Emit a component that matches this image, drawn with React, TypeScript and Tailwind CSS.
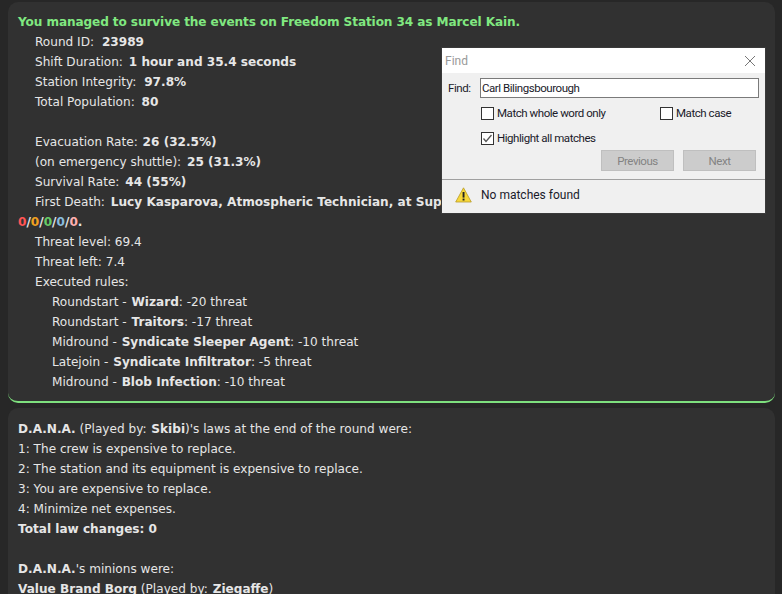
import React from 'react';

const Line = ({ indent = 0, children }: { indent?: 0 | 1 | 2; children?: React.ReactNode }) => (
  <div className={`h-5 whitespace-nowrap ${indent === 1 ? 'pl-[17px]' : indent === 2 ? 'pl-[34px]' : ''}`}>{children}</div>
);

const Check = ({ checked }: { checked?: boolean }) => (
  <span className="flex h-[13px] w-[13px] items-center justify-center border border-[#333333] bg-white">
    {checked && (
      <svg width="11" height="11" viewBox="0 0 11 11" fill="none">
        <path d="M1.5 5.5 L4 8.5 L9.5 2" stroke="#555555" strokeWidth="1.3" />
      </svg>
    )}
  </span>
);

function FindDialog() {
  return (
    <div className="absolute left-[441px] top-[47px] w-[325px] h-[167px] border border-[#3a3a3a] bg-[#f0f0f0] font-['Roboto',sans-serif] text-[11.5px] tracking-[-0.45px] text-[#1a1a2a]">
      <div className="flex h-[25px] items-center justify-between bg-white pl-[3px] pr-[9px] text-[12px] tracking-normal text-[#999999]">
        <span>Find</span>
        <svg width="12" height="12" viewBox="0 0 12 12" fill="none">
          <path d="M1 1 L11 11 M11 1 L1 11" stroke="#777777" strokeWidth="1" />
        </svg>
      </div>
      <div className="flex items-center pt-[5px] pl-[6px] pr-[6px]">
        <span className="w-[32px]">Find:</span>
        <div className="flex h-[20px] w-[279px] items-center border border-[#7a7a7a] bg-white pl-[1px]">Carl Bilingsbourough</div>
      </div>
      <div className="mt-[5px] flex h-5 items-center pl-[39px]">
        <Check />
        <span className="ml-[3px] w-[163px]">Match whole word only</span>
        <Check />
        <span className="ml-[3px]">Match case</span>
      </div>
      <div className="mt-[5px] flex h-5 items-center gap-[3px] pl-[39px]">
        <Check checked />
        <span>Highlight all matches</span>
      </div>
      <div className="mt-[2px] flex justify-end gap-[9px] pr-[9px]">
        <div className="flex h-[21px] w-[73px] items-center justify-center border border-[#bfbfbf] bg-[#cccccc] text-[#838383]">Previous</div>
        <div className="flex h-[21px] w-[73px] items-center justify-center border border-[#bfbfbf] bg-[#cccccc] text-[#838383]">Next</div>
      </div>
      <div className="mt-[8px] flex h-[33px] items-center border-t border-[#a0a0a0] pb-[2px] pl-[13px]">
        <svg width="17" height="16" viewBox="0 0 17 16">
          <path d="M8.5 0.8 L16.3 15 L0.7 15 Z" fill="#f7d83a" stroke="#b79a28" strokeWidth="0.8" />
          <rect x="7.6" y="5" width="1.9" height="5.6" fill="#222222" />
          <rect x="7.6" y="11.6" width="1.9" height="1.9" fill="#222222" />
        </svg>
        <span className="ml-[9px] text-[12px] tracking-normal">No matches found</span>
      </div>
    </div>
  );
}

function App() {
  return (
    <div className="relative h-[594px] w-[782px] overflow-hidden bg-[#272727] px-2 pt-[2px] font-['DejaVu_Sans',sans-serif] text-[12.1px] leading-5 text-[#e6e6e6]">
      <div className="h-[401px] w-[767px] rounded-[10px] border-b-2 border-[#7ee07e] bg-[#313131] pl-[10px] pt-[10px]">
        <Line><b className="tracking-[-0.1px] text-[#80e880]">You managed to survive the events on Freedom Station 34 as Marcel Kain.</b></Line>
        <Line indent={1}>Round ID: <b className="ml-[4px]">23989</b></Line>
        <Line indent={1}>Shift Duration: <b className="ml-[2px]">1 hour and 35.4 seconds</b></Line>
        <Line indent={1}>Station Integrity: <b className="ml-[4px]">97.8%</b></Line>
        <Line indent={1}>Total Population: <b className="ml-[3px]">80</b></Line>
        <Line />
        <Line indent={1}>Evacuation Rate: <b className="ml-[1px]">26 (32.5%)</b></Line>
        <Line indent={1}>(on emergency shuttle): <b className="ml-[2px]">25 (31.3%)</b></Line>
        <Line indent={1}>Survival Rate: <b className="ml-[2px]">44 (55%)</b></Line>
        <Line indent={1}>First Death: <b className="ml-[2px]">Lucy Kasparova, Atmospheric Technician, at Supermatter Engine</b></Line>
        <Line>
          <b>
            <span className="text-[#ff5555]">0</span>/<span className="text-[#f0a020]">0</span>/<span className="text-[#66cc66]">0</span>/<span className="text-[#88bbdd]">0</span>/<span className="text-[#ffb0b0]">0</span>.
          </b>
        </Line>
        <Line indent={1}>Threat level: 69.4</Line>
        <Line indent={1}>Threat left: 7.4</Line>
        <Line indent={1}>Executed rules:</Line>
        <Line indent={2}>Roundstart - <b className="ml-[1px]">Wizard</b>: -20 threat</Line>
        <Line indent={2}>Roundstart - <b className="ml-[1px]">Traitors</b>: -17 threat</Line>
        <Line indent={2}>Midround - <b className="ml-[1px]">Syndicate Sleeper Agent</b>: -10 threat</Line>
        <Line indent={2}>Latejoin - <b className="ml-[1px]">Syndicate Infiltrator</b>: -5 threat</Line>
        <Line indent={2}>Midround - <b className="ml-[1px]">Blob Infection</b>: -10 threat</Line>
      </div>
      <div className="mt-[5px] h-[300px] w-[767px] rounded-[10px] bg-[#313131] pl-[10px] pt-[11px]">
        <Line><b>D.A.N.A.</b> (Played by: <b className="ml-[1px]">Skibi</b>)'s laws at the end of the round were:</Line>
        <Line>1: The crew is expensive to replace.</Line>
        <Line>2: The station and its equipment is expensive to replace.</Line>
        <Line>3: You are expensive to replace.</Line>
        <Line>4: Minimize net expenses.</Line>
        <Line><b>Total law changes: 0</b></Line>
        <Line />
        <Line><b>D.A.N.A.</b>'s minions were:</Line>
        <Line><b>Value Brand Borg</b> (Played by: <b className="ml-[1px]">Ziegaffe</b>)</Line>
      </div>
      <FindDialog />
    </div>
  );
}

export default App;
